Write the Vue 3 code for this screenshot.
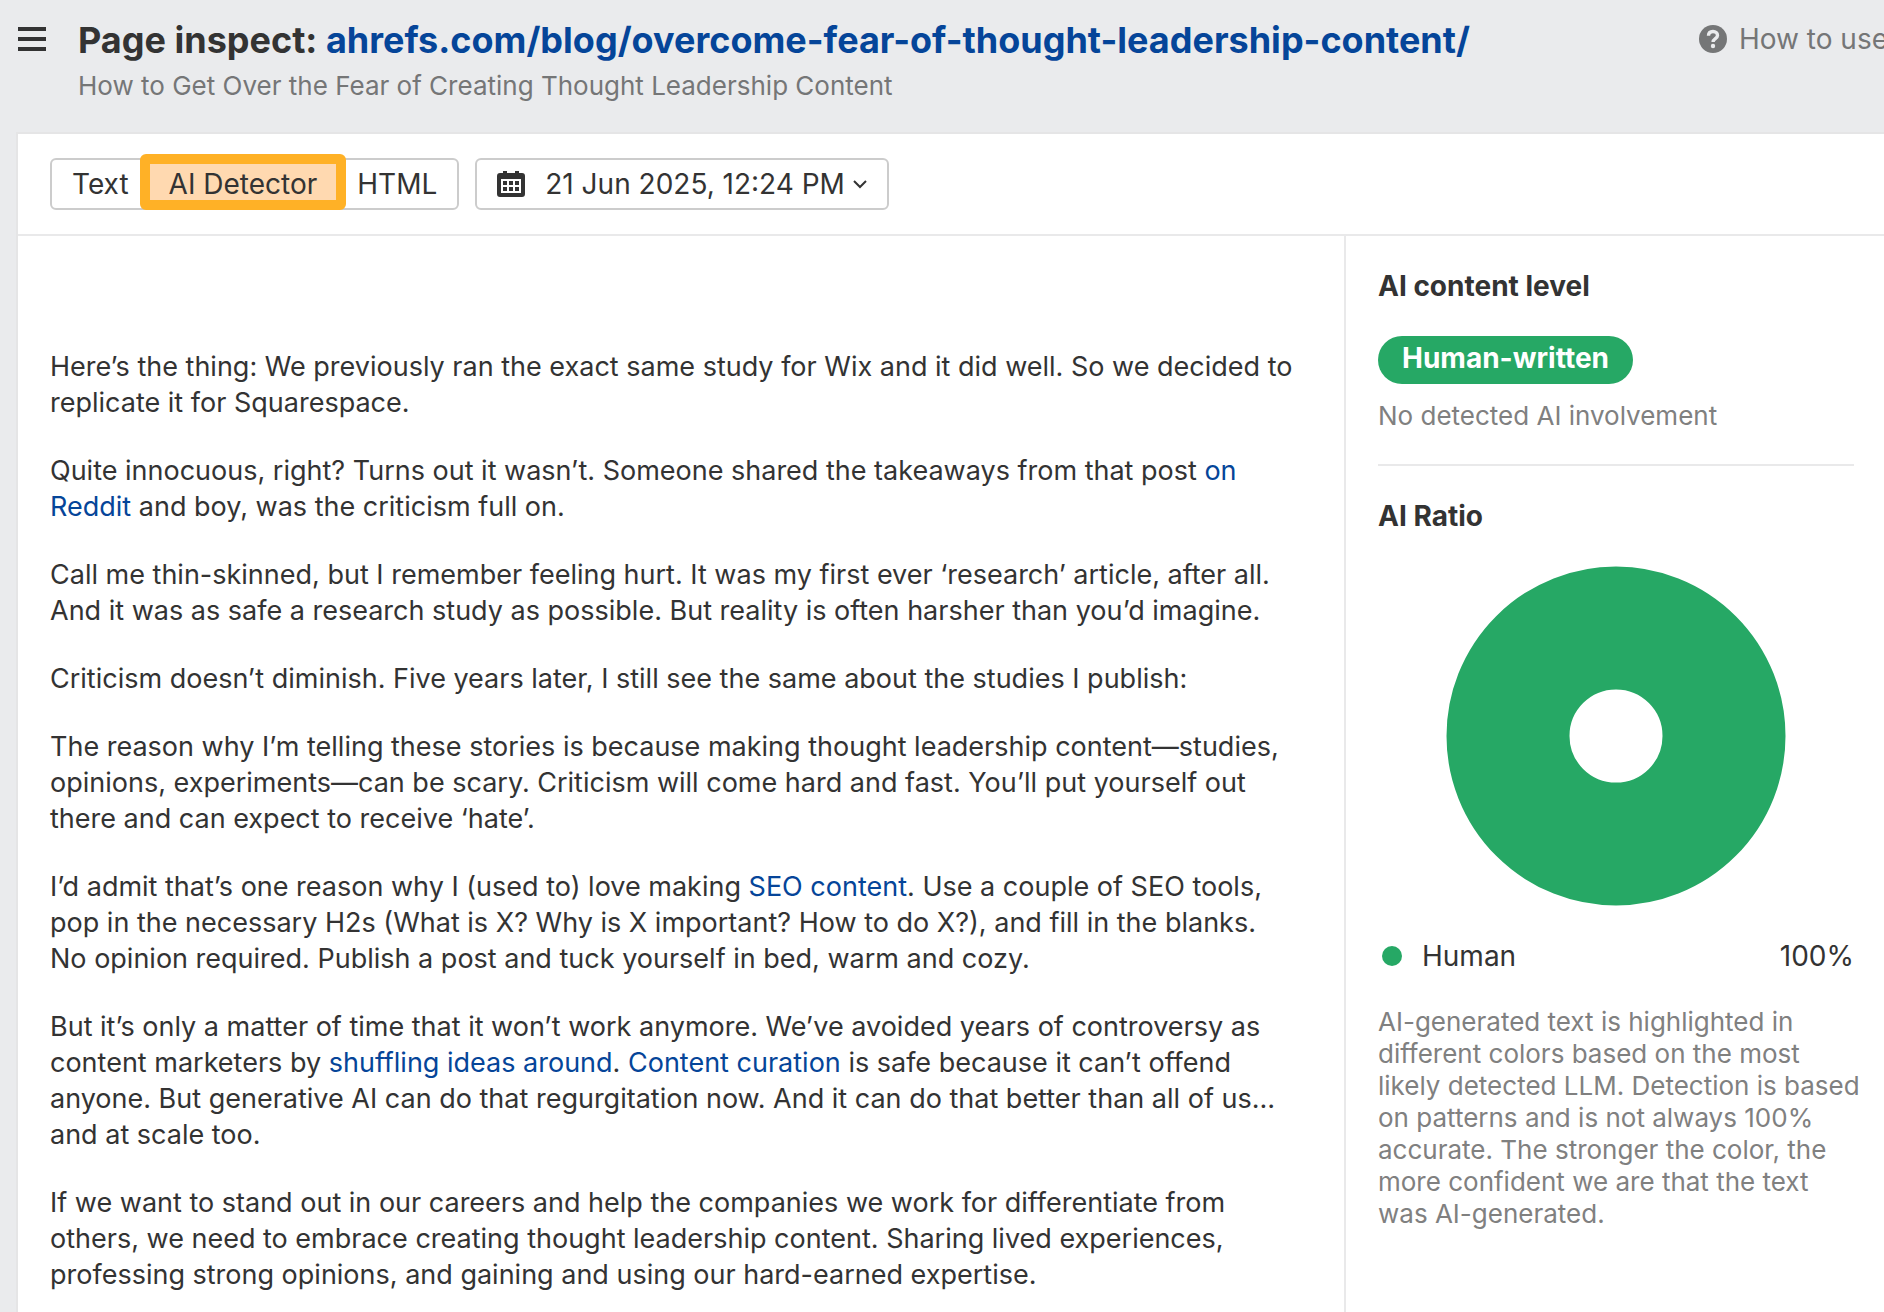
<script setup>
import { ref } from 'vue'

const tabs = ['Text', 'AI Detector', 'HTML']
const activeTab = ref('AI Detector')
const crawlDate = ref('21 Jun 2025, 12:24 PM')

const article = [
  [{ text: 'Here’s the thing: We previously ran the exact same study for Wix and it did well. So we decided to replicate it for Squarespace.' }],
  [
    { text: 'Quite innocuous, right? Turns out it wasn’t. Someone shared the takeaways from that post ' },
    { text: 'on Reddit', href: '#' },
    { text: ' and boy, was the criticism full on.' },
  ],
  [{ text: 'Call me thin-skinned, but I remember feeling hurt. It was my first ever ‘research’ article, after all. And it was as safe a research study as possible. But reality is often harsher than you’d imagine.' }],
  [{ text: 'Criticism doesn’t diminish. Five years later, I still see the same about the studies I publish:' }],
  [{ text: 'The reason why I’m telling these stories is because making thought leadership content—studies, opinions, experiments—can be scary. Criticism will come hard and fast. You’ll put yourself out there and can expect to receive ‘hate’.' }],
  [
    { text: 'I’d admit that’s one reason why I (used to) love making ' },
    { text: 'SEO content', href: '#' },
    { text: '. Use a couple of SEO tools, pop in the necessary H2s (What is X? Why is X important? How to do X?), and fill in the blanks. No opinion required. Publish a post and tuck yourself in bed, warm and cozy.' },
  ],
  [
    { text: 'But it’s only a matter of time that it won’t work anymore. We’ve avoided years of controversy as content marketers by ' },
    { text: 'shuffling ideas around', href: '#' },
    { text: '. ' },
    { text: 'Content curation', href: '#' },
    { text: ' is safe because it can’t offend anyone. But generative AI can do that regurgitation now. And it can do that better than all of us… and at scale too.' },
  ],
  [{ text: 'If we want to stand out in our careers and help the companies we work for differentiate from others, we need to embrace creating thought leadership content. Sharing lived experiences, professing strong opinions, and gaining and using our hard-earned expertise.' }],
]
</script>

<template>
  <div class="page">
    <header class="header">
      <button class="menu" type="button" aria-label="Open menu">
        <svg width="28" height="24" viewBox="0 0 28 24" fill="currentColor" aria-hidden="true">
          <path d="M0 0h28v4H0zM0 10h28v4H0zM0 20h28v4H0z" />
        </svg>
      </button>
      <div class="heading">
        <h1 class="title">
          Page inspect:
          <a href="#">ahrefs.com/blog/overcome-fear-of-thought-leadership-content/</a>
        </h1>
        <p class="subtitle">How to Get Over the Fear of Creating Thought Leadership Content</p>
      </div>
      <a class="help" href="#">
        <svg width="28" height="28" viewBox="0 0 28 28" aria-hidden="true">
          <circle cx="14" cy="14" r="14" fill="currentColor" />
          <path d="M9.500 10.800C9.500 8 11.400 6.500 14 6.500s4.500 1.600 4.500 3.900c0 3.200-4.400 3.200-4.400 6.600" fill="none" stroke="#eaebed" stroke-width="3.400" />
          <circle cx="14" cy="21" r="2.200" fill="#eaebed" />
        </svg>
        How to use
      </a>
    </header>

    <main class="panel">
      <div class="toolbar">
        <div class="tabs" role="tablist">
          <button
            v-for="tab in tabs"
            :key="tab"
            class="tab"
            :class="{ active: tab === activeTab }"
            type="button"
            role="tab"
            :aria-selected="tab === activeTab"
            @click="activeTab = tab"
          >{{ tab }}</button>
        </div>
        <label class="date">
          <svg class="calendar" width="28" height="26" viewBox="0 0 28 26" aria-hidden="true">
            <path fill="currentColor" fill-rule="evenodd" d="M6 0h4v2h8V0h4v2h3a3 3 0 0 1 3 3v18a3 3 0 0 1-3 3H3a3 3 0 0 1-3-3V5a3 3 0 0 1 3-3h3zM4 8v14h20V8z" />
            <path fill="currentColor" d="M6 10h4v4H6zM12 10h4v4h-4zM18 10h4v4h-4zM6 16h4v4H6zM12 16h4v4h-4zM18 16h4v4h-4z" />
          </svg>
          <select v-model="crawlDate" aria-label="Crawl date">
            <option>21 Jun 2025, 12:24 PM</option>
          </select>
          <svg width="14" height="10" viewBox="0 0 14 10" fill="none" stroke="currentColor" stroke-width="2" aria-hidden="true">
            <path d="M1 2l6 6 6-6" />
          </svg>
        </label>
      </div>

      <div class="content">
        <article class="article">
          <p v-for="(paragraph, i) in article" :key="i">
            <template v-for="(part, j) in paragraph" :key="j">
              <a v-if="part.href" :href="part.href">{{ part.text }}</a>
              <template v-else>{{ part.text }}</template>
            </template>
          </p>
        </article>

        <aside class="sidebar">
          <section class="level">
            <h2>AI content level</h2>
            <span class="pill">Human-written</span>
            <p class="note">No detected AI involvement</p>
          </section>
          <section class="ratio">
            <h2>AI Ratio</h2>
            <svg class="donut" width="340" height="340" viewBox="0 0 340 340" role="img" aria-label="Human 100%">
              <circle cx="170" cy="170" r="108" fill="none" stroke="currentColor" stroke-width="123" />
            </svg>
            <div class="legend">
              <span class="dot"></span>
              <span>Human</span>
              <span class="value">100%</span>
            </div>
            <p class="note hint">
              AI-generated text is highlighted in different colors based on the most likely detected LLM.
              Detection is based on patterns and is not always 100% accurate. The stronger the color, the
              more confident we are that the text was AI-generated.
            </p>
          </section>
        </aside>
      </div>
    </main>
  </div>
</template>

<style>
body {
  margin: 0;
  background: #eaebed;
}
</style>

<style scoped>
.page {
  box-sizing: border-box;
  display: flex;
  flex-direction: column;
  min-height: 100vh;
  overflow: hidden;
  padding-left: 16px;
  background: #eaebed;
  color: #333;
  font-family: Inter, "Liberation Sans", sans-serif;
  font-size: 28px;
  line-height: 36px;
}

h1,
h2,
p {
  margin: 0;
}

a {
  color: #054599;
  text-decoration: none;
}

button,
select {
  margin: 0;
  padding: 0;
  border: 0;
  background: none;
  color: inherit;
  font: inherit;
  cursor: pointer;
}

.header {
  display: flex;
  align-items: flex-start;
  padding: 18px 0 30px 2px;
  white-space: nowrap;
}

.menu {
  display: flex;
  margin: 9px 32px 0 0;
}

.title {
  font-size: 36px;
  font-weight: 700;
  line-height: 44px;
}

.subtitle {
  margin-top: 8px;
  color: #757677;
  font-size: 26px;
  line-height: 32px;
}

.help {
  display: flex;
  align-items: center;
  gap: 12px;
  margin: 3px -4px 0 auto;
  color: #757677;
}

.panel {
  flex: 1;
  display: flex;
  flex-direction: column;
  border: solid #e5e5e6;
  border-width: 2px 0 0 2px;
  background: #fff;
}

.toolbar {
  display: flex;
  gap: 16px;
  padding: 24px 32px;
  border-bottom: 2px solid #e9e9ea;
}

.tabs,
.date {
  box-sizing: border-box;
  display: flex;
  height: 52px;
  border: 2px solid #ccc;
  border-radius: 6px;
}

.tab {
  position: relative;
  padding: 0 20px;
}

.tab.active {
  background: #ffd9b0;
}

.tab.active::after {
  content: "";
  position: absolute;
  inset: -6px -9px -2px;
  border: 10px solid #ffb126;
  border-radius: 6px;
}

.date {
  align-items: center;
  padding: 0 20px;
}

.calendar {
  margin-right: 20px;
}

.date select {
  appearance: none;
  margin-right: 8px;
}

.content {
  flex: 1;
  display: flex;
}

.article {
  flex: 1;
  padding: 113px 48px 20px 32px;
  font-size: 27px;
}

.article p + p {
  margin-top: 32px;
}

.sidebar {
  box-sizing: border-box;
  width: 540px;
  padding: 32px 30px 0 32px;
  border-left: 2px solid #e9e9ea;
}

h2 {
  margin-bottom: 32px;
  font-size: 28px;
  font-weight: 700;
  line-height: 36px;
}

.level {
  padding-bottom: 32px;
  border-bottom: 2px solid #e9e9ea;
}

.pill {
  display: block;
  width: fit-content;
  margin-bottom: 16px;
  padding: 4px 24px 8px;
  border-radius: 24px;
  background: #26a865;
  color: #fff;
  font-weight: 700;
}

.note {
  color: #808080;
  font-size: 26px;
  line-height: 32px;
}

.hint {
  margin-right: -8px;
}

.ratio {
  padding-top: 32px;
}

.donut {
  display: block;
  margin: 0 auto;
  color: #26a865;
}

.legend {
  display: flex;
  align-items: center;
  gap: 20px;
  margin: 32px 0 32px 4px;
}

.dot {
  width: 20px;
  height: 20px;
  border-radius: 50%;
  background: #26a865;
}

.value {
  margin-left: auto;
}
</style>
